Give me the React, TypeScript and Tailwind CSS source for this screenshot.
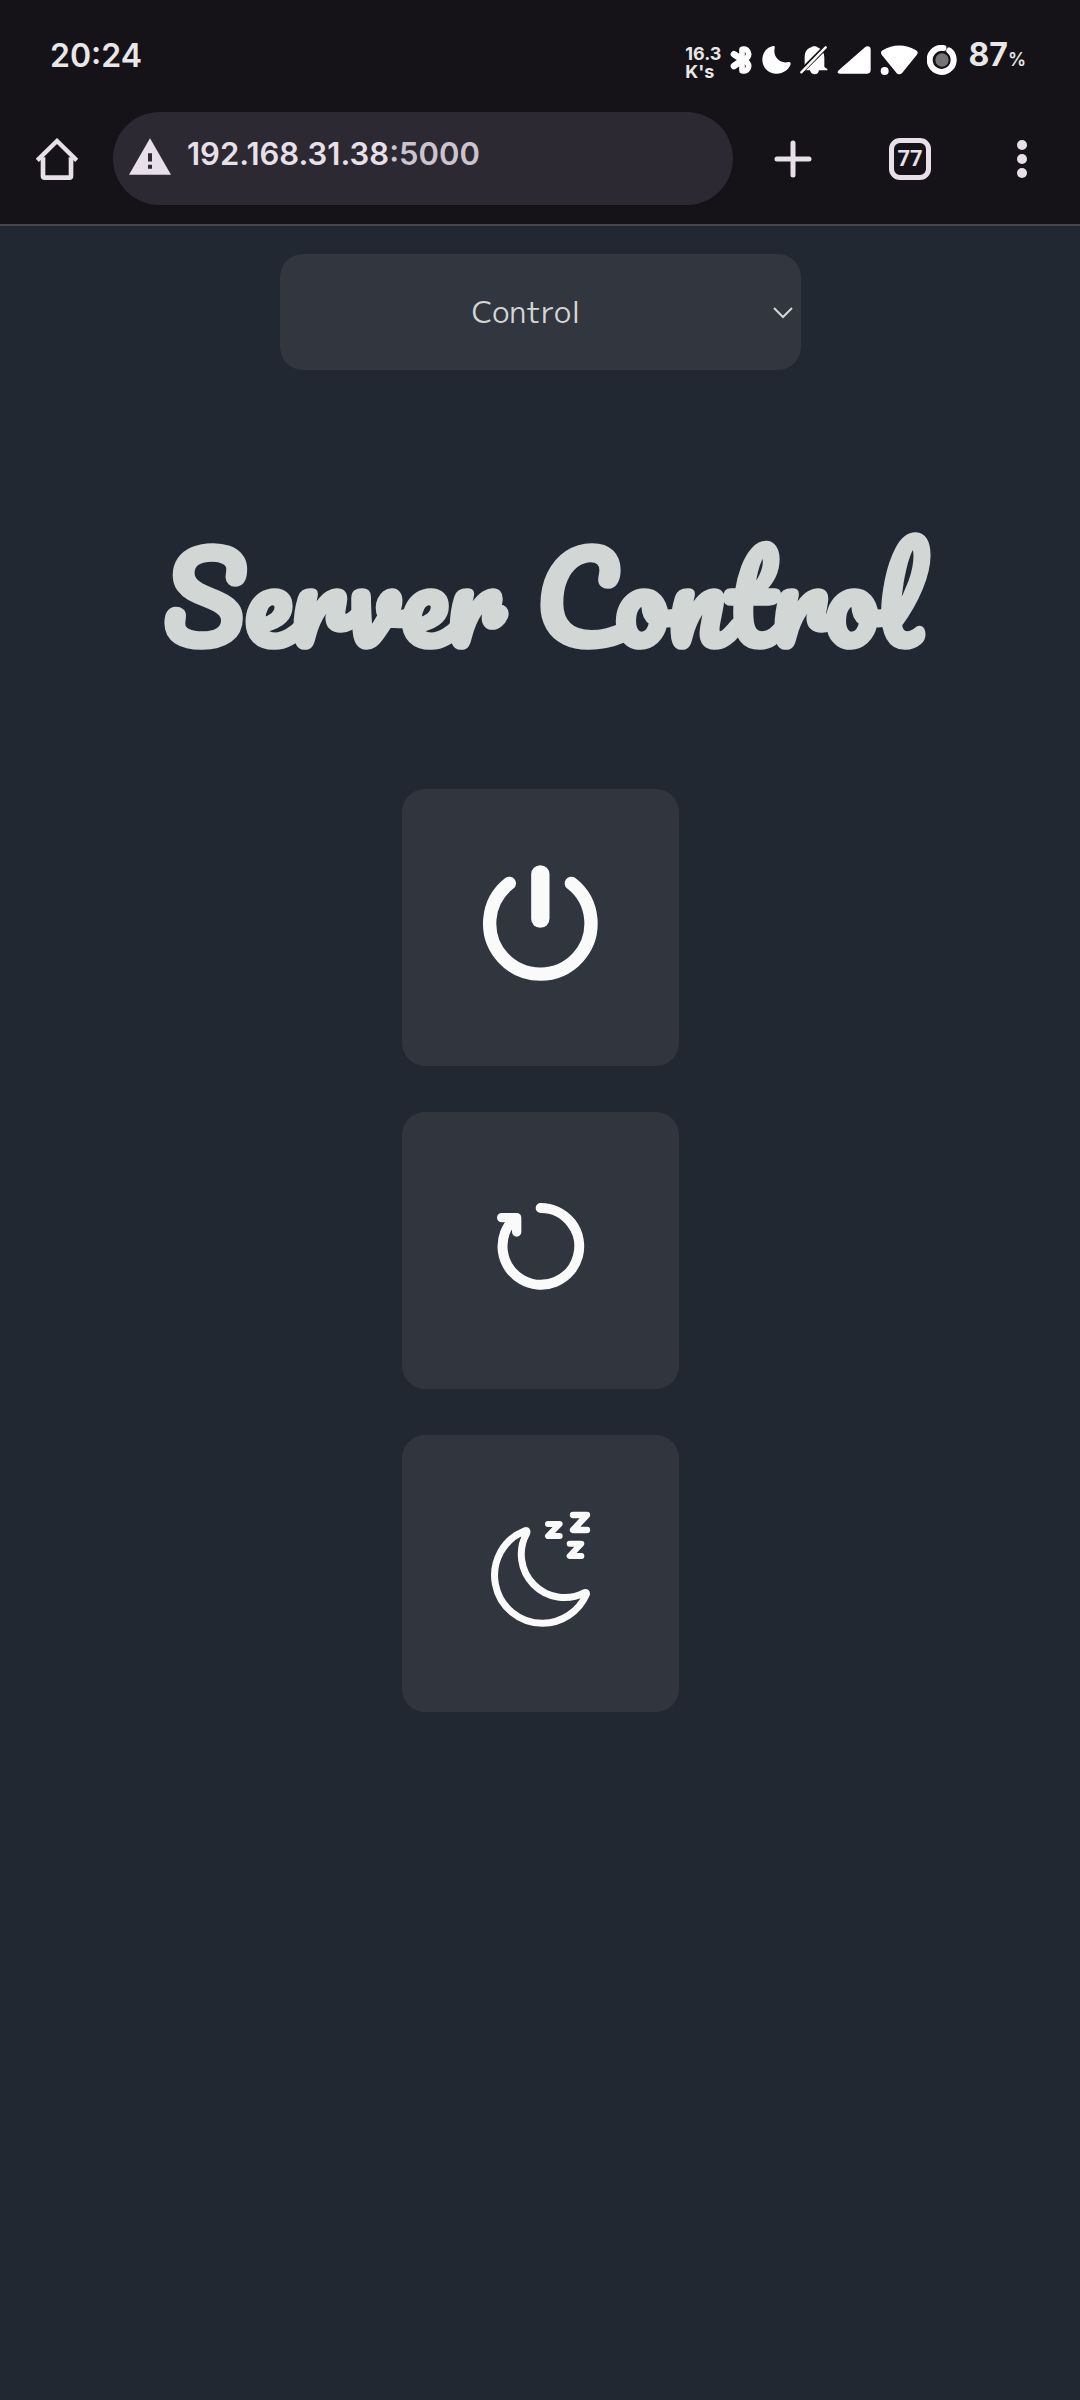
import React from "react";

function StatusIcons() {
  return (
    <div className="flex items-center gap-[9px] text-white">
      <svg className="h-[30px] w-[23px]" viewBox="0 0 69 90" fill="none" stroke="currentColor" strokeLinecap="round" strokeLinejoin="round" role="img" aria-label="Bluetooth">
        <path d="M12 28 L38 45 L12 63" strokeWidth="20" />
        <path d="M36 45 V13 Q54 10 56 27 Q56 38 42 45 Q56 52 56 64 Q54 80 36 77 Z" strokeWidth="17" />
      </svg>
      <svg className="h-[30px] w-[29px]" viewBox="0 0 87 90" fill="currentColor" role="img" aria-label="Do not disturb">
        <path d="M34 3 C12 6 1 26 1 44 C1 68 20 86 44 86 C64 86 80 75 86 58 C87 53 84 50 80 51 C54 58 32 35 38 9 C39 5 38 2 34 3Z" />
      </svg>
      <svg className="h-[30px] w-[28px]" viewBox="0 0 84 90" fill="currentColor" role="img" aria-label="Muted">
        <path d="M14 66 V36 C14 20 22 10 34 7 C37 3 49 3 52 7 C66 12 73 24 73 38 V66 L82 72 V76 H57 C55 85 50 88 44 88 C37 88 32 84 30 76 H5 V72 Z" />
        <path d="M2 81 L78 5" stroke="#151318" strokeWidth="15" />
        <path d="M4 82 L77 7" stroke="currentColor" strokeWidth="7" strokeLinecap="round" />
      </svg>
      <svg className="h-[30px] w-[34px]" viewBox="0 0 102 90" fill="currentColor" role="img" aria-label="Signal">
        <path d="M6 75 L84 7 C91 1 101 4 101 13 V76 C101 82 97 86 91 86 H9 C1 86 0 80 6 75Z" />
      </svg>
      <svg className="h-[30px] w-[38px]" viewBox="0 0 114 90" fill="currentColor" role="img" aria-label="Wi-Fi">
        <path d="M8 16 C38 -3 78 -3 108 16 C114 20 115 25 110 30 L67 83 C61 89 54 89 49 83 L8 33 C2 26 1 20 8 16Z" />
        <circle cx="13" cy="77" r="16" fill="#151318" />
        <circle cx="14" cy="78" r="12" />
      </svg>
      <svg className="h-[30px] w-[30px]" viewBox="0 0 90 90" role="img" aria-label="Battery">
        <circle cx="45" cy="45" r="36" fill="none" stroke="#47444a" strokeWidth="17" />
        <circle cx="45" cy="45" r="22" fill="#777478" stroke="#151318" strokeWidth="4" />
        <path d="M49 9 A36 36 0 1 0 67 17" fill="none" stroke="currentColor" strokeWidth="18" strokeLinecap="round" />
      </svg>
    </div>
  );
}

function StatusBar() {
  return (
    <div className="flex h-[112px] items-center pl-[50px] pr-[54px] text-[#e8e6e6]">
      <time className="text-[32px] font-semibold leading-10">20:24</time>
      <div className="ml-auto mt-[14px] text-[18px] font-bold leading-[18px]">
        <div>16.3</div>
        <div>K's</div>
      </div>
      <div className="ml-[9px] mt-2">
        <StatusIcons />
      </div>
      <div className="ml-[11px] mt-[2px] flex items-baseline text-[32px] font-bold leading-10">
        87<span className="text-[18px] font-semibold">%</span>
      </div>
    </div>
  );
}

function Toolbar() {
  return (
    <div className="flex items-center border-b-2 border-[#47444a] pb-[19px] pl-9 pr-[52px] text-[#e8e0e8]">
      <button type="button" aria-label="Home" className="h-[42px] w-[42px]">
        <svg viewBox="0 0 126 126" className="h-full w-full" fill="none" stroke="currentColor" strokeWidth="14" strokeLinejoin="round">
          <path d="M4 67 L63 9 L122 67" strokeLinejoin="miter" strokeWidth="13" />
          <path d="M21 58 V114 Q21 119 26 119 H100 Q105 119 105 114 V58" />
        </svg>
      </button>
      <div className="ml-[35px] flex h-[93px] flex-1 items-center rounded-full bg-[#2c2932] pl-4 pr-8">
        <svg viewBox="0 0 126 110" className="mb-1 h-[37px] w-[42px] shrink-0" role="img" aria-label="Not secure">
          <path d="M63 0 L126 110 H0Z" fill="currentColor" />
          <path d="M57 45 H69 V70 H57Z M57 80 H69 V92 H57Z" fill="#2c2932" />
        </svg>
        <a href="#server" className="mb-[10px] ml-4 text-[31px] font-semibold leading-10">
          192.168.31.38<span className="text-[#cbc4ce]">:5000</span>
        </a>
      </div>
      <button type="button" aria-label="New tab" className="ml-[41px] h-[38px] w-[38px]">
        <svg viewBox="0 0 38 38" className="h-full w-full" fill="none" stroke="currentColor" strokeWidth="5" strokeLinecap="round">
          <path d="M19 3 V35 M3 19 H35" />
        </svg>
      </button>
      <button type="button" aria-label="Switch tabs" className="ml-[77px] flex h-[42px] w-[42px] items-center justify-center rounded-[11px] border-[5px] border-current font-['Roboto',sans-serif] text-[22px] font-bold leading-6">
        77
      </button>
      <button type="button" aria-label="Menu" className="ml-[85px] h-[38px] w-[12px]">
        <svg viewBox="0 0 12 38" className="h-full w-full" fill="currentColor">
          <circle cx="6" cy="5" r="5" />
          <circle cx="6" cy="19" r="5" />
          <circle cx="6" cy="33" r="5" />
        </svg>
      </button>
    </div>
  );
}

function ActionButton({ label, children }: { label: string; children: React.ReactNode }) {
  return (
    <button type="button" aria-label={label} className="h-[277px] w-[277px] rounded-[23px] bg-[#31353d] text-[#fafafa]">
      {children}
    </button>
  );
}

export default function App() {
  return (
    <div className="flex min-h-screen flex-col bg-[#222831] font-['Inter',sans-serif]">
      <header className="bg-[#151318]">
        <StatusBar />
        <Toolbar />
      </header>
      <main id="server" className="flex flex-col items-center pt-7">
        <div className="relative w-[521px] max-w-full">
          <select
            aria-label="Page"
            defaultValue="control"
            className="h-[116px] w-full appearance-none rounded-[23px] bg-[#32363e] pr-7 text-center font-['M_PLUS_1p','M_PLUS_Rounded_1c','Noto_Sans',sans-serif] text-[30px] font-normal text-[#d3d6d5] [text-align-last:center]"
          >
            <option value="control">Control</option>
          </select>
          <svg viewBox="0 0 20 12" className="pointer-events-none absolute right-2 top-[53px] h-3 w-5" fill="none" stroke="#d3d6d5" strokeWidth="2">
            <path d="M1 1 L10 10 L19 1" />
          </svg>
        </div>

        <h1 className="mt-[147px] pl-1 text-center font-['Pacifico','Lato',cursive] text-[117px] font-bold leading-[160px] text-[#d2d6d5] [-webkit-text-stroke:2px_#d2d6d5]">
          Server Control
        </h1>

        <div className="mt-[112px] flex flex-col gap-[46px]">
          <ActionButton label="Power">
            <svg viewBox="36 27 831 831" className="h-full w-full" fill="none" stroke="currentColor" strokeLinecap="round">
              <path d="M358 310 A152 152 0 1 0 544 310" strokeWidth="40" />
              <path d="M451 283 V416" strokeWidth="55" />
            </svg>
          </ActionButton>
          <ActionButton label="Restart">
            <svg viewBox="36 36 831 831" className="h-full w-full" fill="none" stroke="currentColor" strokeWidth="30" strokeLinecap="round" strokeLinejoin="round">
              <path d="M452 324 A115 115 0 1 1 372 357" />
              <path d="M335 353 H380 V396" strokeWidth="28" />
            </svg>
          </ActionButton>
          <ActionButton label="Sleep">
            <svg viewBox="36 30 831 831" className="h-full w-full" fill="none" stroke="currentColor" strokeLinecap="round" strokeLinejoin="round">
              <path d="M405 317 A144 144 0 0 0 458 595 A145 145 0 0 0 589 508 Q591 501 584 503 A130 130 0 0 1 410 325 Q413 314 405 317Z" strokeWidth="21" />
              <path d="M474 297 H509 L474 333 H509 M539 356 H574 L539 393 H574" strokeWidth="18" />
              <path d="M549 270 H591 L549 315 H591" strokeWidth="19" />
            </svg>
          </ActionButton>
        </div>
      </main>
    </div>
  );
}
